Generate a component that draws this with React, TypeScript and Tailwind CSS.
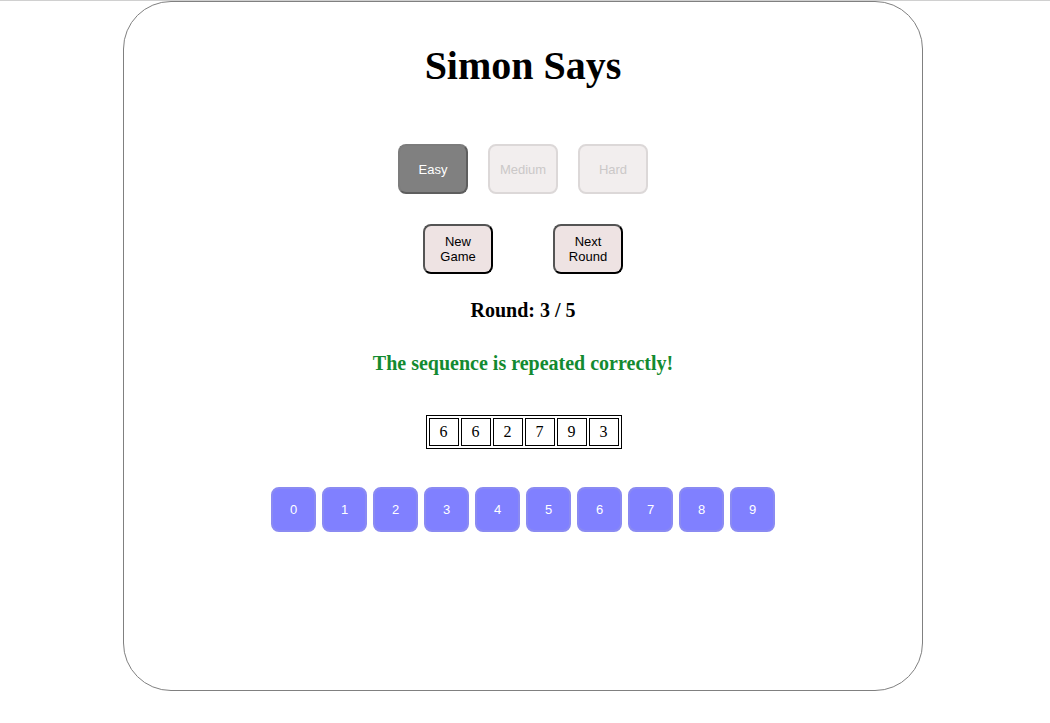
import React from "react";

const levels = [
  { label: "Easy", active: true },
  { label: "Medium", active: false },
  { label: "Hard", active: false },
];

const sequence = [6, 6, 2, 7, 9, 3];
const digits = [0, 1, 2, 3, 4, 5, 6, 7, 8, 9];

export default function App() {
  return (
    <div className="min-h-[723px] bg-white border-t border-[#d0d0d0] font-['Liberation_Serif',serif]">
      <div className="ml-[123px] w-[800px] h-[690px] border border-[#808080] rounded-[48px] flex flex-col items-center">
        <h1 className="mt-[41px] text-[40px] leading-[46px] font-bold text-black">Simon Says</h1>

        <div className="mt-[55px] flex gap-[20px] font-['Liberation_Sans',Arial,sans-serif] text-[13px] leading-[16px]">
          {levels.map((l) =>
            l.active ? (
              <button
                key={l.label}
                className="w-[70px] h-[50px] pt-[2px] rounded-[8px] bg-[#808080] text-white border-2 border-t-[#7c7c7c] border-l-[#7c7c7c] border-r-[#5e5e5e] border-b-[#5e5e5e]"
              >
                {l.label}
              </button>
            ) : (
              <button
                key={l.label}
                className="w-[70px] h-[50px] pt-[2px] rounded-[8px] bg-[#f2eeee] text-[#cbc8c8] border-2 border-[#dcd8d8]"
              >
                {l.label}
              </button>
            )
          )}
        </div>

        <div className="mt-[30px] flex gap-[60px] font-['Liberation_Sans',Arial,sans-serif] text-[13px] leading-[15px] text-black">
          <button className="w-[70px] h-[50px] rounded-[8px] bg-[#eee3e3] border-2 border-black [border-style:outset]">
            New
            <br />
            Game
          </button>
          <button className="w-[70px] h-[50px] rounded-[8px] bg-[#eee3e3] border-2 border-black [border-style:outset]">
            Next
            <br />
            Round
          </button>
        </div>

        <div className="mt-[24px] text-[20px] leading-[24px] font-bold text-black">Round: 3 / 5</div>

        <div className="mt-[29px] text-[20px] leading-[24px] font-bold text-[#138a30]">
          The sequence is repeated correctly!
        </div>

        <table className="mt-[40px] ml-[1px] border border-black border-separate border-spacing-[2px]">
          <tbody>
            <tr>
              {sequence.map((n, i) => (
                <td
                  key={i}
                  className="w-[30px] h-[28px] border border-black text-center text-[16px] leading-none text-black"
                >
                  {n}
                </td>
              ))}
            </tr>
          </tbody>
        </table>

        <div className="mt-[38px] flex gap-[6px] font-['Liberation_Sans',Arial,sans-serif] text-[13px]">
          {digits.map((d) => (
            <button
              key={d}
              className="w-[45px] h-[45px] rounded-[8px] bg-[#8080ff] text-white border-2 border-[#8a8af2]"
            >
              {d}
            </button>
          ))}
        </div>
      </div>
    </div>
  );
}
